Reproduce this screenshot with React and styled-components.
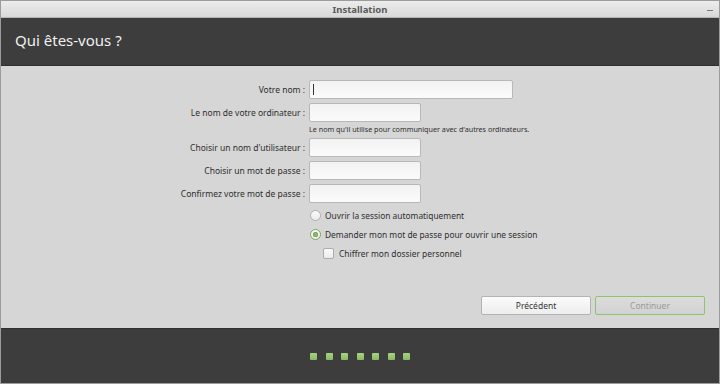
import React from "react";
import styled, { createGlobalStyle } from "styled-components";

const GlobalStyle = createGlobalStyle`
  html, body {
    margin: 0;
    padding: 0;
    background: #3c3c3c;
  }
  * {
    box-sizing: border-box;
  }
`;

const Window = styled.div`
  width: 720px;
  height: 384px;
  display: flex;
  flex-direction: column;
  border: 1px solid #9c9c9c;
  font-family: "Noto Sans", "Open Sans", sans-serif;
  overflow: hidden;
`;

const TitleBar = styled.div`
  height: 17px;
  flex: none;
  display: flex;
  align-items: center;
  justify-content: center;
  position: relative;
  background: linear-gradient(#ececec, #d9d9d9);
  border-bottom: 1px solid #b4b4b4;
  font-size: 9.5px;
  font-weight: bold;
  color: #5a5a5a;
`;

const Minimize = styled.span`
  position: absolute;
  right: 6px;
  top: 9px;
  width: 6px;
  height: 1px;
  background: #7a7a7a;
`;

const Header = styled.div`
  height: 48px;
  flex: none;
  background: #3d3d3d;
  color: #f0f0f0;
  font-size: 15px;
  display: flex;
  align-items: center;
  padding-left: 14px;
  padding-bottom: 3px;
  border-bottom: 1px solid #2f2f2f;
`;

const Content = styled.div`
  flex: 1;
  background: #d6d6d6;
  display: flex;
  flex-direction: column;
  padding-top: 14px;
  font-size: 8.5px;
  color: #2e2e2e;
`;

const Row = styled.div`
  display: flex;
  align-items: center;
  height: 19px;
  margin-bottom: ${(p) => p.gap ?? 4}px;
`;

const Label = styled.label`
  width: 308px;
  padding-right: 4px;
  text-align: right;
  white-space: nowrap;
`;

const Input = styled.div`
  width: ${(p) => p.w}px;
  height: 19px;
  border: 1px solid #b8b8b8;
  border-radius: 2px;
  background: linear-gradient(#f2f2f2, #fbfbfb);
  position: relative;
`;

const Caret = styled.span`
  position: absolute;
  left: 3px;
  top: 3px;
  width: 1px;
  height: 11px;
  background: #333;
`;

const Hint = styled.div`
  padding-left: 308px;
  font-size: 7.2px;
  height: 14px;
  line-height: 14px;
  margin-bottom: 2px;
  color: #2e2e2e;
`;

const OptionRow = styled.div`
  display: flex;
  align-items: center;
  height: 19px;
  padding-left: ${(p) => p.indent}px;
  gap: ${(p) => p.space}px;
  font-size: 8.4px;
`;

const Radio = styled.span`
  width: 11px;
  height: 11px;
  border-radius: 50%;
  border: 1px solid ${(p) => (p.checked ? "#7aa860" : "#b0b0b0")};
  background: linear-gradient(#fafafa, #ececec);
  display: flex;
  align-items: center;
  justify-content: center;
  &::after {
    content: "";
    display: ${(p) => (p.checked ? "block" : "none")};
    width: 5px;
    height: 5px;
    border-radius: 50%;
    background: #8dbb6e;
    box-shadow: 0 0 0 1px #7aa860 inset;
  }
`;

const Check = styled.span`
  width: 11px;
  height: 11px;
  border-radius: 2px;
  border: 1px solid #ababab;
  background: linear-gradient(#fafafa, #ececec);
`;

const Spacer = styled.div`
  flex: 1;
`;

const Buttons = styled.div`
  display: flex;
  justify-content: flex-end;
  gap: 4px;
  padding-right: 14px;
  margin-bottom: 13px;
`;

const Button = styled.button`
  width: 110px;
  height: 19px;
  border-radius: 2px;
  border: 1px solid ${(p) => (p.primary ? "#8fc46b" : "#b3b3b3")};
  background: ${(p) =>
    p.primary ? "linear-gradient(#dcdcdc, #d2d2d2)" : "linear-gradient(#fbfbfb, #ededed)"};
  color: ${(p) => (p.primary ? "#9a9a9a" : "#333")};
  font-family: inherit;
  font-size: 8.5px;
  padding: 0;
`;

const Footer = styled.div`
  height: 55px;
  flex: none;
  background: #3d3d3d;
  border-top: 1px solid #2f2f2f;
  display: flex;
  justify-content: center;
  align-items: center;
  gap: 8.5px;
`;

const Dot = styled.span`
  width: 7px;
  height: 7px;
  border-radius: 1px;
  background: linear-gradient(#a6d483, #86bb62);
`;

const fields = [
  { label: "Choisir un nom d'utilisateur :", w: 112, gap: 4 },
  { label: "Choisir un mot de passe :", w: 112, gap: 4 },
  { label: "Confirmez votre mot de passe :", w: 112, gap: 3 },
];

export default function App() {
  return (
    <>
      <GlobalStyle />
      <Window>
        <TitleBar>
          Installation
          <Minimize />
        </TitleBar>
        <Header>Qui êtes-vous ?</Header>
        <Content>
          <Row>
            <Label>Votre nom :</Label>
            <Input w={204}>
              <Caret />
            </Input>
          </Row>
          <Row gap={0}>
            <Label>Le nom de votre ordinateur :</Label>
            <Input w={112} />
          </Row>
          <Hint>Le nom qu'il utilise pour communiquer avec d'autres ordinateurs.</Hint>
          {fields.map((f) => (
            <Row key={f.label} gap={f.gap}>
              <Label>{f.label}</Label>
              <Input w={f.w} />
            </Row>
          ))}
          <OptionRow indent={309} space={4}>
            <Radio />
            Ouvrir la session automatiquement
          </OptionRow>
          <OptionRow indent={309} space={4}>
            <Radio checked />
            Demander mon mot de passe pour ouvrir une session
          </OptionRow>
          <OptionRow indent={322} space={5}>
            <Check />
            Chiffrer mon dossier personnel
          </OptionRow>
          <Spacer />
          <Buttons>
            <Button>Précédent</Button>
            <Button primary>Continuer</Button>
          </Buttons>
        </Content>
        <Footer>
          {Array.from({ length: 7 }).map((_, i) => (
            <Dot key={i} />
          ))}
        </Footer>
      </Window>
    </>
  );
}
